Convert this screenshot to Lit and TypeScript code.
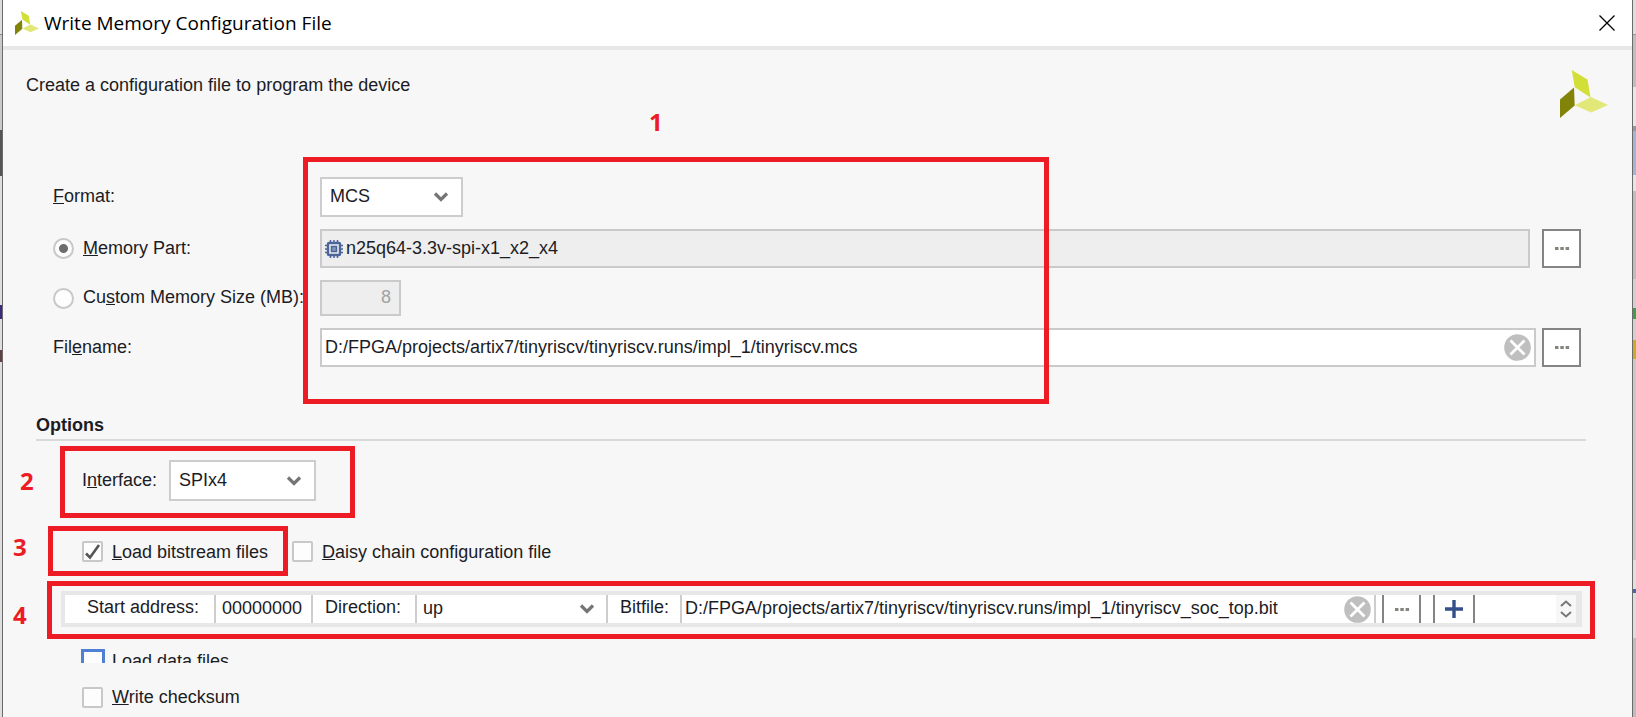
import { LitElement, html, css, svg } from "lit";
import { customElement } from "lit/decorators.js";

const chevron = html`<svg class="chevron" width="16" height="12" viewBox="0 0 16 12" aria-hidden="true">
  <path d="M2 2.5 8 8.5 14 2.5" fill="none" stroke="#757575" stroke-width="3.2" />
</svg>`;

const dots = html`<svg width="16" height="5" viewBox="0 0 16 5" aria-hidden="true">
  <path d="M1 1h3.5v3H1zM6.3 1h3.5v3H6.3zM11.6 1h3.5v3h-3.5z" fill="#85857b" />
</svg>`;

const clear = html`<svg width="27" height="27" viewBox="0 0 27 27" aria-hidden="true">
  <circle cx="13.5" cy="13.5" r="13.3" fill="#bfbfc0" />
  <path d="M6.5 6.5 20.5 20.5M20.5 6.5 6.5 20.5" stroke="#fff" stroke-width="2.8" />
</svg>`;

const logoShapes = svg`
  <path d="M11.7 0 27.5 9.500 30.5 27.500 14.800 17.200z" fill="#d2df36" />
  <path d="M0 29.500 14 17.500 14.700 35.500 0 48z" fill="#828409" />
  <path d="M14.800 35.200 31 27 48 35 31 42.500z" fill="#e1e878" />
`;

@customElement("app-root")
export class AppRoot extends LitElement {
  static styles = css`
    :host {
      display: block;
      position: relative;
      min-height: 100vh;
      box-sizing: border-box;
      padding: 0 3px 0 2px;
      overflow: hidden;
      font: 18px/24px "Liberation Sans", Arial, sans-serif;
      color: #1c1c24;
      background:
        linear-gradient(#dcdcdc 34px, #888 34px 35px, #c9c9c9 35px 130px, #555 130px 176px, #dedede 176px 305px, #3d2a7c 305px 319px, #dedede 319px 350px, #604040 350px 362px, #dedede 362px) left / 2px 100% no-repeat,
        linear-gradient(#dcdcdc 34px, #999 34px 35px, #bebebe 35px 87px, #e6e6e6 87px 126px, #999 126px 131px, #a5b3d5 131px 175px, #e4e4e4 175px 191px, #bdbdbd 191px 279px, #d0d0d0 279px 308px, #3f9f4c 308px 319px, #d0d0d0 319px 340px, #d0aa20 340px 359px, #c9c9c9 359px 560px, #e0e0e0 560px 589px, #4467b0 589px 593px, #dcdcdc 593px 638px, #bdbdbd 638px) right / 3px 100% no-repeat;
    }
    * { box-sizing: border-box; }
    .dialog {
      display: flow-root;
      min-height: 100vh;
      border: solid #6b6b6b;
      border-width: 0 1px;
      background: #f7f7f7;
    }
    .titlebar {
      display: flex;
      align-items: center;
      gap: 5px;
      height: 50px;
      padding: 0 17px 4px 12px;
      background: linear-gradient(#fff 46px, #e7e7e7 46px);
      color: #000;
    }
    .titlebar h1 {
      flex: 1;
      margin: 0;
      padding-bottom: 1px;
      font: 19px/28px "Open Sans", "Noto Sans", sans-serif;
    }
    button {
      display: grid;
      place-items: center;
      padding: 0;
      border: 0;
      background: none;
    }
    .intro {
      display: flex;
      justify-content: space-between;
      padding: 20px 24px 59px 23px;
    }
    .intro p { margin: 0; line-height: 30px; }
    .intro svg { display: block; }
    .form {
      display: grid;
      gap: 12px;
      padding: 0 51px 0 50px;
    }
    .row { display: flex; align-items: center; }
    .caption {
      display: flex;
      align-items: center;
      gap: 9px;
      flex: 0 0 267px;
      white-space: nowrap;
    }
    .caption span, .interface label { padding-bottom: 2px; }
    input, select {
      font: inherit;
      color: inherit;
      margin: 0;
    }
    input[type="text"] {
      flex: 1;
      min-width: 0;
      padding: 0 0 2px;
      border: 0;
      outline: 0;
      background: none;
    }
    .combo { display: grid; align-items: center; }
    .combo > * { grid-area: 1 / 1; }
    .combo select {
      appearance: none;
      width: 143px;
      height: 40px;
      padding: 0 8px 2px;
      border: 2px solid #cdcdcd;
      background: #fff;
    }
    .combo .chevron {
      justify-self: end;
      margin-right: 14px;
      pointer-events: none;
    }
    .field {
      display: flex;
      align-items: center;
      flex: 1;
      min-width: 0;
      height: 39px;
      padding: 0 3px;
      border: 2px solid #cacaca;
      background: #fff;
    }
    .field.off { background: #eee; }
    .field.part { margin-right: 12px; gap: 3px; }
    .field.path { margin-right: 6px; }
    .field.size {
      flex: 0 0 81px;
      height: 36px;
      padding-right: 8px;
      color: #a2a2a2;
    }
    .field.size input { width: 100%; text-align: right; }
    .browse {
      width: 39px;
      height: 39px;
      border: 2px solid #848484;
      background: #fff;
    }
    input[type="radio"], input[type="checkbox"] {
      appearance: none;
      flex: none;
      width: 21px;
      height: 21px;
      border: 2px solid #c8c8c8;
      background: #fdfdfd;
    }
    input[type="radio"] { border-radius: 50%; }
    input[type="radio"]:checked {
      background: radial-gradient(circle, #6c6c6c 4px, #fdfdfd 5px);
    }
    input[type="checkbox"] { border-radius: 2px; }
    .box { display: grid; }
    .box > * { grid-area: 1 / 1; }
    .check {
      display: flex;
      align-items: center;
      gap: 9px;
      white-space: nowrap;
    }
    h2 {
      margin: 46px 46px 0 33px;
      padding-bottom: 2px;
      border-bottom: 2px solid #dadada;
      font-size: 18px;
      line-height: 24px;
    }
    .interface {
      gap: 12px;
      margin: 19px 0 0 79px;
    }
    .interface select { width: 147px; height: 41px; }
    .checks {
      gap: 24px;
      height: 21px;
      margin: 40px 0 0 79px;
    }
    .files {
      display: flex;
      align-items: stretch;
      height: 36px;
      margin: 29px 50px 0 58px;
      border: solid #e7e7e7;
      border-width: 4px 6px 4px 4px;
      background: #fff;
    }
    .files > label {
      flex: none;
      border-right: 2px solid #cdcdcd;
      line-height: 25px;
      white-space: nowrap;
    }
    .start { width: 151px; padding-left: 22px; }
    .dir { width: 104px; padding-left: 12px; }
    .bit { width: 74px; padding-left: 12px; }
    .files .address {
      flex: 0 0 97px;
      padding-left: 6px;
      border-right: 2px solid #cdcdcd;
    }
    .files select {
      width: 191px;
      height: 28px;
      padding: 0 6px 2px;
      border-width: 0 2px 0 0;
    }
    .files .combo .chevron { margin-right: 13px; }
    .bitpath {
      display: flex;
      align-items: center;
      flex: 1;
      padding: 0 3px 0 3px;
      border-right: 2px solid #cdcdcd;
    }
    .cellbtn {
      width: 39px;
      margin-left: 6px;
      border: solid #848484;
      border-width: 0 2px;
    }
    .add { width: 42px; margin-left: 12px; }
    .spin {
      display: grid;
      align-content: space-evenly;
      width: 20px;
      margin-left: 81px;
      background: #f7f7f7;
    }
    .clipped {
      height: 14px;
      margin: 22px 0 0 78px;
      overflow: hidden;
      align-items: flex-start;
      gap: 7px;
    }
    .clipped input[type="checkbox"] {
      width: 24px;
      height: 24px;
      border: 3px solid #4f80d3;
      border-radius: 0;
    }
    .last {
      height: 21px;
      margin: 24px 0 9px 79px;
    }
    .last span { padding-bottom: 2px; }
    .mark {
      position: absolute;
      border: 5px solid #ed1c24;
      pointer-events: none;
    }
    .m1 { left: 303px; top: 157px; width: 746px; height: 247px; }
    .m2 { left: 60px; top: 446px; width: 295px; height: 72px; }
    .m3 { left: 48px; top: 526px; width: 240px; height: 50px; }
    .m4 { left: 47px; right: 41px; top: 581px; height: 58px; }
    .num {
      position: absolute;
      color: #ed1c24;
      font: bold 24px/28px "Open Sans", "Noto Sans", sans-serif;
    }
    .n1 { left: 649px; top: 108px; }
    .n2 { left: 20px; top: 467px; }
    .n3 { left: 13px; top: 533px; }
    .n4 { left: 13px; top: 601px; }
  `;

  render() {
    return html`
      <div class="dialog">
        <header class="titlebar">
          <svg width="24" height="24" viewBox="0 0 48 48" aria-hidden="true">${logoShapes}</svg>
          <h1>Write Memory Configuration File</h1>
          <button aria-label="Close">
            <svg width="16" height="16" viewBox="0 0 16 16">
              <path d="M.5.5 15.5 15.5M15.5.5.5 15.5" stroke="#000" stroke-width="1.3" />
            </svg>
          </button>
        </header>

        <div class="intro">
          <p>Create a configuration file to program the device</p>
          <svg width="48" height="48" viewBox="0 0 48 48" aria-hidden="true">${logoShapes}</svg>
        </div>

        <div class="form">
          <div class="row">
            <label class="caption" for="format"><span><u>F</u>ormat:</span></label>
            <div class="combo">
              <select id="format"><option>MCS</option></select>${chevron}
            </div>
          </div>
          <div class="row">
            <label class="caption"><input type="radio" name="memory" checked /><span><u>M</u>emory Part:</span></label>
            <div class="field part off">
              <svg width="18" height="18" viewBox="0 0 18 18" aria-hidden="true">
                <path d="M5.5 0v18M9 0v18M12.5 0v18M0 5.5h18M0 9h18M0 12.5h18" stroke="#4c659b" stroke-width="1.5" />
                <rect x="3" y="3" width="12" height="12" rx="1" fill="#eee" stroke="#4c659b" stroke-width="2.4" />
                <rect x="6.5" y="6.5" width="5" height="5" fill="#8295bd" stroke="#4c659b" stroke-width="1.5" />
              </svg>
              <input type="text" aria-label="Memory part" readonly value="n25q64-3.3v-spi-x1_x2_x4" />
            </div>
            <button class="browse" aria-label="Browse memory parts">${dots}</button>
          </div>
          <div class="row">
            <label class="caption"><input type="radio" name="memory" /><span>Cu<u>s</u>tom Memory Size (MB):</span></label>
            <div class="field size off"><input type="text" aria-label="Custom memory size" disabled value="8" /></div>
          </div>
          <div class="row">
            <label class="caption" for="filename"><span>Fil<u>e</u>name:</span></label>
            <div class="field path">
              <input id="filename" type="text" value="D:/FPGA/projects/artix7/tinyriscv/tinyriscv.runs/impl_1/tinyriscv.mcs" />
              <button aria-label="Clear filename">${clear}</button>
            </div>
            <button class="browse" aria-label="Browse files">${dots}</button>
          </div>
        </div>

        <h2>Options</h2>
        <div class="row interface">
          <label for="interface">I<u>n</u>terface:</label>
          <div class="combo">
            <select id="interface"><option>SPIx4</option></select>${chevron}
          </div>
        </div>

        <div class="row checks">
          <label class="check">
            <span class="box">
              <input type="checkbox" checked />
              <svg width="21" height="21" viewBox="0 0 21 21" aria-hidden="true">
                <path d="M4 12.5 8 16.5 17 4" fill="none" stroke="#555" stroke-width="2.6" />
              </svg>
            </span>
            <span><u>L</u>oad bitstream files</span>
          </label>
          <label class="check"><input type="checkbox" /><span><u>D</u>aisy chain configuration file</span></label>
        </div>

        <div class="files">
          <label class="start" for="start">Start address:</label>
          <input class="address" id="start" type="text" value="00000000" />
          <label class="dir" for="direction">Direction:</label>
          <div class="combo">
            <select id="direction"><option>up</option></select>${chevron}
          </div>
          <label class="bit" for="bitfile">Bitfile:</label>
          <div class="bitpath">
            <input id="bitfile" type="text" value="D:/FPGA/projects/artix7/tinyriscv/tinyriscv.runs/impl_1/tinyriscv_soc_top.bit" />
            <button aria-label="Clear bitfile">${clear}</button>
          </div>
          <button class="cellbtn" aria-label="Browse bitfile">${dots}</button>
          <button class="cellbtn add" aria-label="Add bitfile">
            <svg width="18" height="18" viewBox="0 0 18 18"><path d="M9 0v18M0 9h18" stroke="#34508a" stroke-width="3.4" /></svg>
          </button>
          <div class="spin">
            <button aria-label="Up">
              <svg width="12" height="7" viewBox="0 0 12 7"><path d="M1 6 6 1.5 11 6" fill="none" stroke="#777" stroke-width="2" /></svg>
            </button>
            <button aria-label="Down">
              <svg width="12" height="7" viewBox="0 0 12 7"><path d="M1 1 6 5.5 11 1" fill="none" stroke="#777" stroke-width="2" /></svg>
            </button>
          </div>
        </div>

        <label class="check clipped"><input type="checkbox" /><span>Load data files</span></label>
        <label class="check last"><input type="checkbox" /><span><u>W</u>rite checksum</span></label>
      </div>

      <div class="mark m1"></div>
      <div class="mark m2"></div>
      <div class="mark m3"></div>
      <div class="mark m4"></div>
      <span class="num n1">1</span>
      <span class="num n2">2</span>
      <span class="num n3">3</span>
      <span class="num n4">4</span>
    `;
  }
}
